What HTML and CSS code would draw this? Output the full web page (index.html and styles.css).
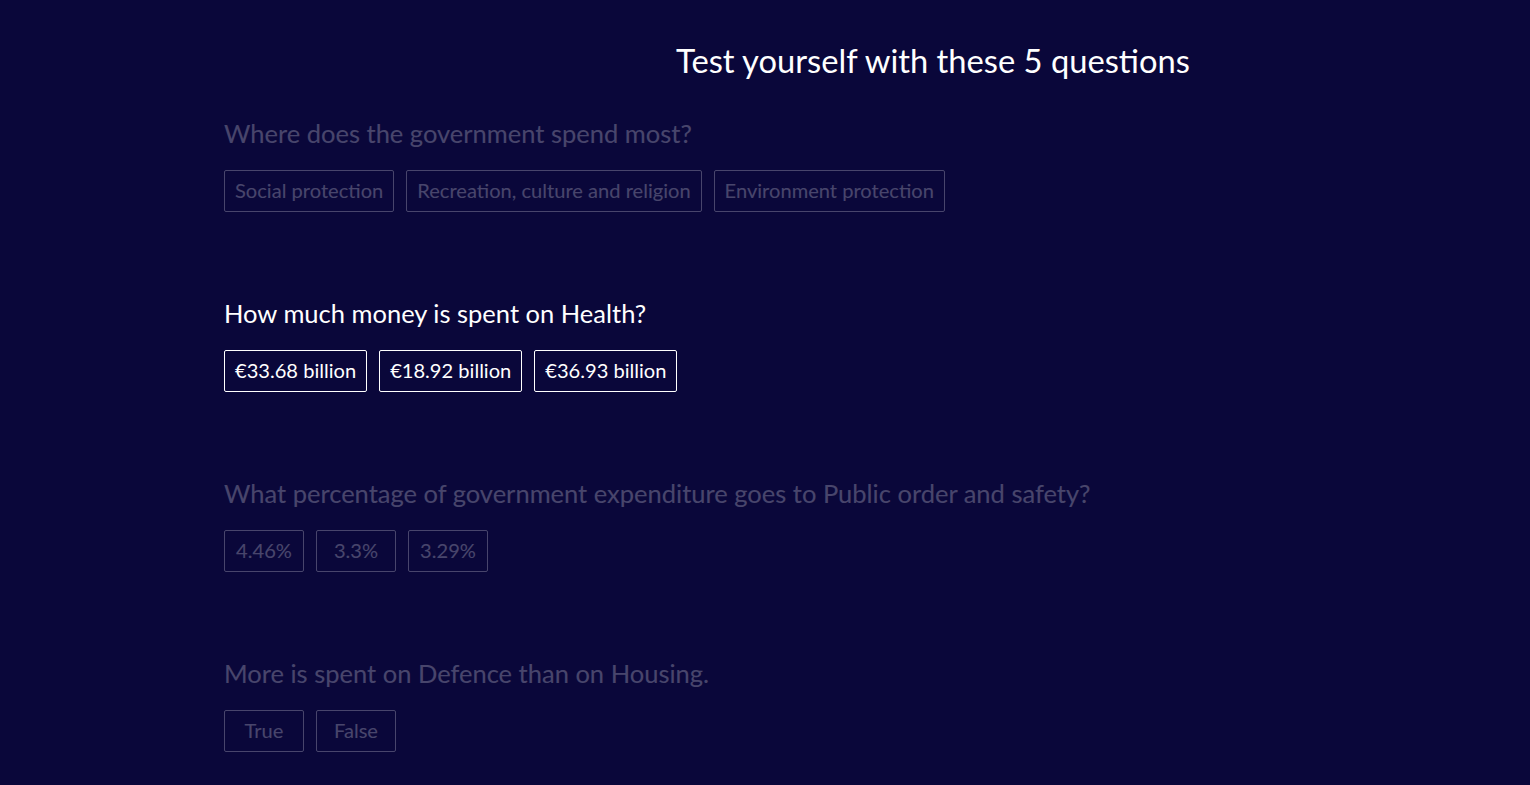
FILE: index.html
```html
<!DOCTYPE html>
<html lang="en">
<head>
<meta charset="utf-8">
<title>Quiz</title>
<link rel="stylesheet" href="styles.css">
</head>
<body>
<div class="page">
  <header class="header">
    <h1 class="title">Test yourself with these 5 questions</h1>
  </header>
  <main class="quiz">
    <section class="question dim">
      <h2 class="q-text">Where does the government spend most?</h2>
      <div class="answers">
        <button class="answer">Social protection</button>
        <button class="answer">Recreation, culture and religion</button>
        <button class="answer">Environment protection</button>
      </div>
    </section>
    <section class="question">
      <h2 class="q-text">How much money is spent on Health?</h2>
      <div class="answers">
        <button class="answer">€33.68 billion</button>
        <button class="answer">€18.92 billion</button>
        <button class="answer">€36.93 billion</button>
      </div>
    </section>
    <section class="question dim">
      <h2 class="q-text">What percentage of government expenditure goes to Public order and safety?</h2>
      <div class="answers">
        <button class="answer">4.46%</button>
        <button class="answer">3.3%</button>
        <button class="answer">3.29%</button>
      </div>
    </section>
    <section class="question dim">
      <h2 class="q-text">More is spent on Defence than on Housing.</h2>
      <div class="answers">
        <button class="answer">True</button>
        <button class="answer">False</button>
      </div>
    </section>
  </main>
</div>
</body>
</html>
```

FILE: styles.css
```css
html, body {
  margin: 0;
  padding: 0;
  background: #0a073a;
  height: 100%;
  overflow: hidden;
}
body {
  font-family: "Lato", "Noto Sans", sans-serif;
  color: #ffffff;
}
.page {
  display: flex;
  flex-direction: column;
}
.header {
  padding-left: 336px;
  padding-top: 39px;
}
.title {
  margin: 0;
  text-align: center;
  font-size: 32.7px;
  font-weight: 400;
  line-height: 44px;
}
.quiz {
  padding-left: 224px;
  padding-top: 35px;
  display: flex;
  flex-direction: column;
  gap: 87px;
}
.question {
  display: flex;
  flex-direction: column;
  gap: 22px;
}
.question.dim {
  opacity: 0.25;
}
.q-text {
  margin: 0;
  font-size: 25.5px;
  font-weight: 400;
  line-height: 30px;
}
.answers {
  display: flex;
  gap: 12px;
}
.answer {
  font-family: inherit;
  font-size: 20.1px;
  color: #ffffff;
  background: transparent;
  border: 1px solid #ffffff;
  border-radius: 2px;
  height: 42px;
  min-width: 80px;
  padding: 0 10px 2px;
  text-align: center;
}
.quiz > .question + .question {
  margin-top: -1px;
}
```
